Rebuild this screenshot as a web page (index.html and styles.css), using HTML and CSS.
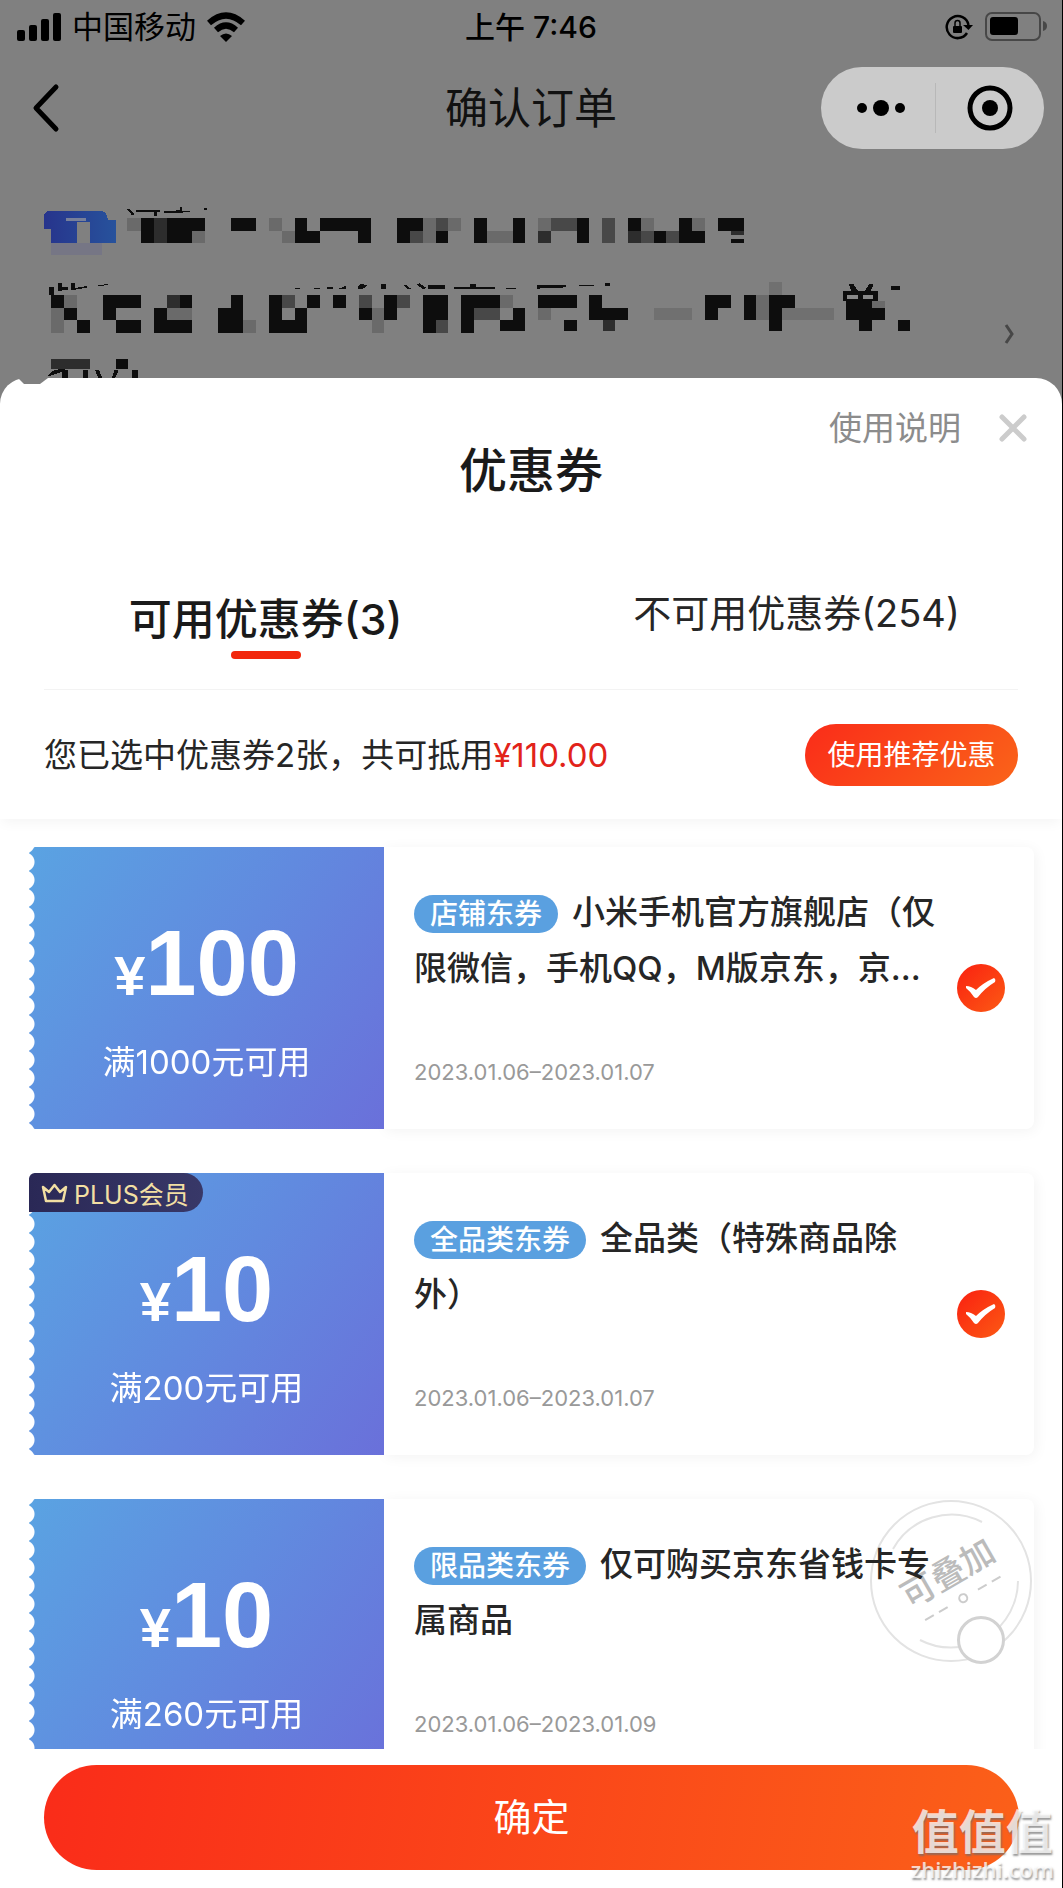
FILE: index.html
```html
<!DOCTYPE html>
<html lang="zh-CN">
<head>
<meta charset="utf-8">
<meta name="viewport" content="width=device-width, initial-scale=1">
<title>确认订单</title>
<link rel="stylesheet" href="styles.css">
</head>
<body>
<div class="app">
  <div class="status">
    <div class="status-left">
      <svg width="45" height="28" viewBox="0 0 45 28" aria-hidden="true"><rect x="0" y="17" width="8" height="11" rx="2"/><rect x="12" y="12" width="8" height="16" rx="2"/><rect x="24" y="6" width="8" height="22" rx="2"/><rect x="36" y="0" width="8" height="28" rx="2"/></svg>
      <span class="carrier">中国移动</span>
      <svg width="40" height="30" viewBox="0 0 40 30" aria-hidden="true"><g fill="none" stroke="#000" stroke-width="6"><path d="M3 11Q20-4 37 11"/><path d="M10 18Q20 9 30 18"/></g><path d="M14 24Q20 19 26 24L20 30Z"/></svg>
    </div>
    <time class="clock">上午 7:46</time>
    <div class="status-right">
      <svg width="28" height="26" viewBox="0 0 28 26" aria-hidden="true"><path d="M22 19A11 11 0 1 1 23.500 11" fill="none" stroke="#000" stroke-width="2.500"/><path d="M18 11H28L23.500 16Z"/><rect x="8" y="12" width="9" height="7" rx="1"/><path d="M10 12V9a2.500 2.500 0 0 1 5 0v3" fill="none" stroke="#000" stroke-width="1.500"/></svg>
      <svg width="63" height="29" viewBox="0 0 63 29" aria-hidden="true"><rect x="1" y="1" width="54" height="27" rx="6" fill="none" stroke="#474747" stroke-width="2"/><rect x="5" y="5" width="28" height="18" rx="3"/><path d="M58 9q4 1 4 5t-4 5z" fill="#474747"/></svg>
    </div>
  </div>
  <header class="nav">
    <button class="back" aria-label="返回"><svg width="28" height="50" viewBox="0 0 28 50"><path d="M24 4L4 25L24 46" fill="none" stroke="#000" stroke-width="5" stroke-linecap="round" stroke-linejoin="round"/></svg></button>
    <h1>确认订单</h1>
    <div class="capsule">
      <button class="capsule-more" aria-label="更多"><svg width="50" height="18" viewBox="0 0 50 18"><circle cx="6" cy="9" r="5"/><circle cx="25" cy="9" r="8"/><circle cx="44" cy="9" r="5"/></svg></button>
      <button class="capsule-close" aria-label="关闭"><svg width="46" height="46" viewBox="0 0 46 46"><circle cx="23" cy="23" r="20" fill="none" stroke="#000" stroke-width="5"/><circle cx="23" cy="23" r="8"/></svg></button>
    </div>
  </header>
  <section class="address" aria-label="收货地址">
    <svg viewBox="0 0 3133 564" preserveAspectRatio="none" shape-rendering="crispEdges">
      <defs><linearGradient id="tag"><stop offset="0" stop-color="#27348c"/><stop offset="1" stop-color="#27529c"/></linearGradient></defs>
      <path d="M130 117V80q0-18 20-18H290q28 0 28 28h23v70H265V95H227v65H151V117Z" fill="url(#tag)"/>
      <path d="M151 160H302v36H151Z" fill="#767685"/><path d="M195 84h60v10h-60Z" fill="#78809a"/>
      <g fill="#0d0d0d">
        <path d="M372 56l8 0 18 16-8 4ZM400 60h71v7h-8v12h-8V67h-55ZM484 63l46-2V50h8v12h40l-40 6-54 2ZM602 55h9v4h-9Z"/>
        <path d="M416 84h38v76h-38ZM492 84h38v76h-38ZM530 84h74v38h-37v38h-37ZM680 84h75v38h-75ZM869 84h38v38h38v38h-76ZM945 84h150v76h-38v-38H945ZM1172 84h75v38h-38v38h-37ZM1285 122h37v38h-37ZM1398 84h38v76h-38ZM1512 84h38v76h-38Z"/>
        <path d="M1701 84h38v76h-38ZM1853 84h37v38h-37ZM1928 122h38v38h-38ZM2004 84h38v38h38v38h-76ZM2118 84h76v38h-76ZM2156 148h38v12h-38Z"/>
        <path d="M145 290h14v25h-14ZM170 280h12v22h-12ZM180 292h22v8h-22ZM208 280h12v14l36-6v5l-48 8ZM290 286l28-4v3l-28 4ZM850 298l34-4v4ZM925 294h20v4h-20ZM965 291h16v7h-16ZM1000 296l20-8v8ZM1055 298q2-16 14-16l14 4-14 12ZM1125 281h14v17h-14ZM1190 286l8-2 14 12-8 2ZM1230 284l8-4 20 14-10 4ZM1264 286h50v11h-50ZM1338 291h50v-10h16v10h55v7h-121ZM1488 297q20-6 43 0Z"/>
        <path d="M151 315h38v38h38v38h38v38h-38v-38h-38v-38h-38ZM303 315h113v38h-75v38h-38ZM341 391h75v38h-75ZM530 315h37v38h-37ZM454 353h38v38h75v38H454ZM680 315h38v114h-75v-76h37ZM793 315h38v76h38v-38h38v76H793ZM907 315h38v38h-38ZM983 315h37v38h-37ZM1059 353h37v38h-37ZM1134 315h38v76h-38ZM1247 315h75v76h-37v38h-38ZM1361 315h114v38h-76v76h-38ZM1512 353h38v69h-76v-31h38Z"/>
        <path d="M1583 285h88v7l-88 4ZM1709 286h44v3h-44ZM1784 280h16v7h-16ZM1588 315h113v38h-113ZM1663 391h38v31h-38ZM1739 315h38v38h76v38h-114ZM2080 315h76v38h-38v38h-38ZM2194 315h37v76h-37ZM2269 315h76v38h-38v69h-37ZM2486 303h26l-8-20h14l14 20h20l12-22h14l-10 22h22v29h20v59h-38v31h-38v-31h-38v-59h-10ZM2630 287h26v14h-26ZM2648 391h38v31h-38Z"/>
        <path d="M341 507h37v31h-37ZM140 560q15-30 60-20l2 24h-18l-2-18ZM245 540h15v24h-15ZM280 540h12l10 24h-12ZM338 540h12l-10 24h-10ZM390 540h16v24h-16Z"/>
      </g>
      <path d="M2498 315h32v11h-32ZM2546 315h30v11h-30Z" fill="#888"/>
      <g fill="#2d2d2d"><path d="M454 84h38v76h-38ZM1588 122h38v38h-38ZM1853 122h37v38h-37ZM2156 122h38v13h-38ZM492 315h38v38h-38ZM1778 391h37v31h-37ZM151 507h114v31H151Z"/></g>
      <g fill="#484848"><path d="M1209 122h38v38h-38ZM1285 84h37v38h-37ZM1626 84h75v38h-75ZM1777 84h38v76h-38ZM1890 122h38v38h-38ZM1966 122h38v38h-38ZM831 315h38v38h-38ZM1059 315h37v38h-37ZM1172 315h37v38h-37ZM1285 391h37v38h-37ZM1399 353h75v38h-75Z"/></g>
      <g fill="#6a6a6a"><path d="M376 84h40v38h-40ZM567 122h37v38h-37ZM793 84h38v38h-38ZM831 122h38v38h-38ZM1247 84h38v76h-38ZM1322 84h38v38h-38ZM1436 122h76v38h-76ZM1588 84h38v38h-38ZM1890 84h38v38h-38ZM2042 84h38v38h-38ZM189 315h38v38h-38ZM151 353h38v76h-38ZM492 353h75v38h-75ZM718 391h37v38h-37ZM1096 353h38v76h-38ZM1475 315h37v38h-37ZM1588 353h38v38h-38ZM2231 315h38v76h-38ZM2572 332h38v21h-38Z"/></g>
      <path d="M1928 353h113v38h-113ZM2269 277h38v38h-38ZM2307 353h152v38h-152Z" fill="#707070"/>
    </svg>
    <button class="more" aria-label="编辑地址"><svg width="10" height="22" viewBox="0 0 10 22"><path d="M2 2L8 11L2 20" fill="none" stroke="#474747" stroke-width="3"/></svg></button>
  </section>

  <main class="sheet">
    <svg class="notch" width="30" height="7" viewBox="0 0 30 7" aria-hidden="true"><path d="M0 0H30L22 6H6Z" fill="#808080"/></svg>
    <div class="sheet-head">
      <div class="sheet-tools">
        <a href="#help">使用说明</a>
        <button aria-label="关闭优惠券"><svg width="28" height="28" viewBox="0 0 28 28"><path d="M3 3L25 25M25 3L3 25" stroke="#ccc" stroke-width="5" stroke-linecap="round"/></svg></button>
      </div>
      <h2>优惠券</h2>
    </div>
    <div class="tabs" role="tablist">
      <button class="tab tab-on" role="tab" aria-selected="true">可用优惠券(3)</button>
      <button class="tab" role="tab" aria-selected="false">不可用优惠券(254)</button>
    </div>
    <div class="summary">
      <p>您已选中优惠券2张，共可抵用<span class="amount">¥110.00</span></p>
      <button class="recommend">使用推荐优惠</button>
    </div>
    <div class="list">
      <article class="coupon">
        <div class="face">
          <div class="value"><p class="price"><small>¥</small>100</p><p class="rule">满1000元可用</p></div>
        </div>
        <div class="info">
          <div class="text">
            <h3><span class="kind">店铺东券</span><label for="c1">小米手机官方旗舰店（仅限微信，手机QQ，M版京东，京...</label></h3>
            <p class="date">2023.01.06–2023.01.07</p>
          </div>
          <input class="pick" type="checkbox" id="c1" checked>
        </div>
      </article>
      <article class="coupon">
        <div class="face">
          <div class="value"><p class="price"><small>¥</small>10</p><p class="rule">满200元可用</p></div>
          <span class="plus"><svg width="27" height="20" viewBox="0 0 27 20" aria-hidden="true"><path d="M2 4L8 9L13.500 2L19 9L25 4L22 18H5Z" fill="none" stroke="#f2dfa3" stroke-width="2.500" stroke-linejoin="round"/></svg>PLUS会员</span>
        </div>
        <div class="info">
          <div class="text">
            <h3><span class="kind">全品类东券</span><label for="c2">全品类（特殊商品除外）</label></h3>
            <p class="date">2023.01.06–2023.01.07</p>
          </div>
          <input class="pick" type="checkbox" id="c2" checked>
        </div>
      </article>
      <article class="coupon">
        <div class="face">
          <div class="value"><p class="price"><small>¥</small>10</p><p class="rule">满260元可用</p></div>
        </div>
        <div class="info">
          <svg class="stamp" width="164" height="164" viewBox="0 0 164 164">
            <g fill="none" stroke="#e3e3e3" stroke-width="2"><circle cx="82" cy="82" r="80"/><path d="M24 50A67 67 0 0 1 113 23M149 82A67 67 0 0 1 51 141"/></g>
            <g transform="rotate(-30 82 82)"><text x="83" y="86" text-anchor="middle" font-size="34" font-weight="500" fill="#bbb">可叠加</text>
            <path d="M40 103h10M56 103h10M101 103h10M117 103h10" stroke="#ccc" stroke-width="2"/><circle cx="84" cy="103" r="4" fill="none" stroke="#ccc" stroke-width="2"/></g>
          </svg>
          <div class="text">
            <h3><span class="kind">限品类东券</span><label for="c3">仅可购买京东省钱卡专属商品</label></h3>
            <p class="date">2023.01.06–2023.01.09</p>
          </div>
          <input class="pick" type="checkbox" id="c3">
        </div>
      </article>
    </div>
  </main>
  <footer class="footer"><button class="confirm">确定</button></footer>
  <div class="watermark"><strong>值值值</strong><span>zhizhizhi.com</span></div>
</div>
</body>
</html>
```

FILE: styles.css
```css
* { box-sizing: border-box; }
body, h1, h2, h3, p { margin: 0; font-weight: 400; }
button { margin: 0; padding: 0; border: 0; background: none; font: inherit; color: inherit; cursor: pointer; }
svg { display: block; }

body {
  background: #808080;
  color: #262626;
  font-family: Inter, "Noto Sans CJK SC", sans-serif;
  font-size: 33px;
}
.app {
  position: relative;
  display: flex;
  flex-direction: column;
  height: 100vh;
  overflow: hidden;
  border-right: 1px solid #000;
}

/* status bar */
.status {
  display: grid;
  grid-template-columns: 1fr auto 1fr;
  align-items: center;
  height: 53px;
  padding: 0 14px;
  color: #000;
}
.status-left, .status-right { display: flex; align-items: center; gap: 12px; }
.status-left { gap: 10px; padding-left: 3px; }
.status-right { justify-content: flex-end; }
.carrier { font-size: 31px; line-height: 40px; }
.clock { font-size: 30px; line-height: 40px; font-weight: 500; }

/* navigation bar */
.nav {
  display: grid;
  grid-template-columns: 1fr auto 1fr;
  align-items: center;
  height: 110px;
  padding: 0 18px;
}
.nav h1 { font-size: 43px; line-height: 60px; color: #111; }
.back { justify-self: start; padding-left: 14px; }
.capsule {
  justify-self: end;
  display: flex;
  align-items: center;
  width: 223px;
  height: 82px;
  border-radius: 41px;
  background: #cbcbcb;
}
.capsule button { flex: 1; display: flex; justify-content: center; align-items: center; height: 50px; }
.capsule .capsule-more { padding-left: 6px; }
.capsule .capsule-close { border-left: 1px solid #b8b8b8; }

/* address block */
.address { position: relative; padding-top: 27px; }
.address > svg { width: 100%; height: 188px; }
.more { position: absolute; right: 48px; top: 160px; }

/* coupon sheet */
.sheet {
  position: relative;
  flex: 1;
  min-height: 0;
  display: flex;
  flex-direction: column;
  border-radius: 26px 26px 0 0;
  background: #fff;
}
.notch { position: absolute; left: 18px; top: 0; }
.sheet-head { padding-top: 33px; }
.sheet-tools { display: flex; justify-content: flex-end; align-items: center; gap: 38px; height: 34px; padding-right: 35px; }
.sheet-tools a { color: #8c8c8c; text-decoration: none; line-height: 34px; }
.sheet-head h2 { text-align: center; font-size: 48px; line-height: 52px; font-weight: 500; color: #1a1a1a; }

.tabs { display: flex; align-items: flex-start; margin: 86px 44px 0; padding-bottom: 30px; border-bottom: 1px solid #f2f2f2; }
.tab { flex: 1; font-size: 38px; line-height: 60px; }
.tab-on { font-size: 43px; font-weight: 500; padding-top: 6px; color: #1a1a1a; }
.tab-on::after { content: ""; display: block; width: 70px; height: 8px; margin: 2px auto 0; border-radius: 4px; background: #f2270c; }
.tab:first-child { margin-left: -44px; }
.tab:last-child { margin-right: -44px; }

.summary {
  position: relative;
  display: flex;
  justify-content: space-between;
  align-items: center;
  height: 129px;
  padding: 0 44px;
  box-shadow: 0 6px 12px -2px #f5f5f5;
}
.summary p { line-height: 44px; }
.amount { color: #e2231a; }
.recommend {
  width: 213px;
  height: 62px;
  padding-bottom: 4px;
  border-radius: 31px;
  background: linear-gradient(135deg, #fa2c19, #fa6419);
  color: #fff;
  font-size: 28px;
}

.list {
  flex: 1;
  min-height: 0;
  display: flex;
  flex-direction: column;
  gap: 44px;
  padding: 28px 28px 28px 29px;
  overflow-y: auto;
  scrollbar-width: none;
}
.coupon { flex: none; display: flex; height: 282px; }
.face { position: relative; z-index: 1; flex: none; width: 355px; }
.value {
  height: 100%;
  padding-top: 60px;
  text-align: center;
  color: #fff;
  border-radius: 6px 0 0 6px;
  background: linear-gradient(125deg, #5aa3e2, #618adf 50%, #6a70da);
  -webkit-mask: radial-gradient(circle 10px at -4px 50%, transparent 9px, #000 10px) 0 6px / 100% 18px;
  mask: radial-gradient(circle 10px at -4px 50%, transparent 9px, #000 10px) 0 6px / 100% 18px;
}
.price { font-family: "Liberation Sans", sans-serif; font-size: 92px; line-height: 112px; font-weight: 700; }
.price small { font-size: 56px; }
.rule { margin-top: 8px; line-height: 44px; }
.plus {
  position: absolute;
  left: 0;
  top: 0;
  display: flex;
  align-items: center;
  gap: 6px;
  height: 39px;
  padding: 0 14px 0 12px;
  border-radius: 6px 20px 20px 0;
  background: linear-gradient(90deg, #2a2856, #383868);
  color: #f2dfa3;
  font-size: 25px;
}

.info {
  position: relative;
  flex: 1;
  display: flex;
  align-items: center;
  justify-content: space-between;
  padding: 0 29px 0 30px;
  border-radius: 0 8px 8px 0;
  box-shadow: 2px 2px 14px #f3f3f3;
}
.text { position: relative; align-self: stretch; display: flex; flex-direction: column; justify-content: space-between; width: 530px; padding: 37px 0; }
.text h3 { font-size: 33px; line-height: 56px; font-weight: 500; }
.kind {
  display: inline-block;
  height: 38px;
  margin-right: 14px;
  padding: 0 16px;
  border-radius: 19px;
  background: #5aa0e0;
  color: #fff;
  font-size: 28px;
  line-height: 38px;
}
.date { font-size: 22px; line-height: 40px; color: #999; }
.pick {
  position: relative;
  appearance: none;
  width: 48px;
  height: 48px;
  margin: 0;
  border: 3px solid #d2d2d2;
  border-radius: 50%;
  background: #fff;
}
.pick:checked {
  border: 0;
  background:
    url("data:image/svg+xml,%3Csvg xmlns='http://www.w3.org/2000/svg' viewBox='0 0 48 48'%3E%3Cpath d='M9 22q5 0 10 4 7-7 18-12 2 1 1 4-10 6-17 15-2 2-4 0-3-5-8-9z' fill='%23fff'/%3E%3C/svg%3E"),
    linear-gradient(135deg, #fa2010, #fc5a14);
}
.stamp { position: absolute; right: 1px; top: 0; }

/* confirm bar */
.footer { position: relative; padding: 16px 43px 18px 44px; background: #fff; }
.confirm {
  width: 100%;
  height: 105px;
  padding-bottom: 6px;
  border-radius: 53px;
  background: linear-gradient(100deg, #fa2c19, #fb6019);
  color: #fff;
  font-size: 38px;
}

.watermark {
  position: absolute;
  right: 8px;
  bottom: 6px;
  display: flex;
  flex-direction: column;
  align-items: center;
  color: rgba(255, 255, 255, 0.75);
  text-shadow: 1px 2px 2px rgba(110, 110, 110, 0.7);
}
.watermark strong { font-size: 47px; line-height: 48px; font-weight: 700; }
.watermark span { font-family: "Open Sans", sans-serif; font-size: 22px; line-height: 26px; font-weight: 600; }
```
